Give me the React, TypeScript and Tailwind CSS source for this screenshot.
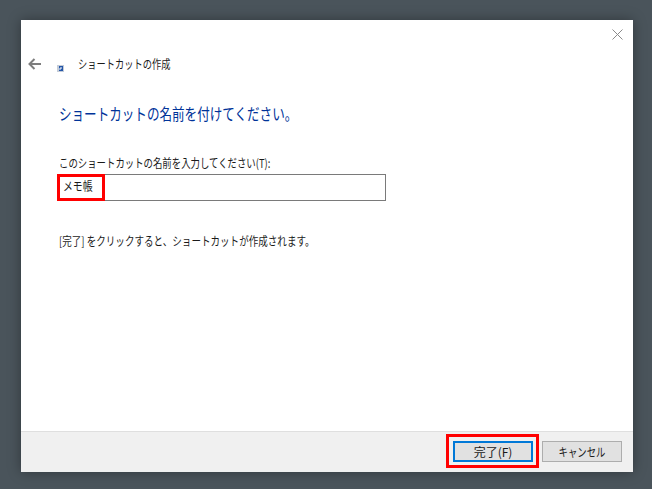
const FONT = "font-['Noto_Sans_CJK_JP','Liberation_Sans',sans-serif]";

function CloseIcon() {
  return (
    <svg width="11" height="11" viewBox="0 0 11 11">
      <path d="M0.5 0.5 L10.5 10.5 M10.5 0.5 L0.5 10.5" stroke="#8a8a8a" strokeWidth="1" fill="none" />
    </svg>
  );
}

function BackArrow() {
  return (
    <svg width="13" height="12" viewBox="0 0 13 12">
      <path d="M6.5 1 L1.5 6 L6.5 11 M1.5 6 L13 6" stroke="#7d7d7d" strokeWidth="2" fill="none" />
    </svg>
  );
}

function ShortcutIcon() {
  return (
    <svg width="7" height="7" viewBox="0 0 7 7">
      <rect x="0" y="0" width="7" height="7" fill="#c4ccd8" />
      <rect x="2" y="1" width="4" height="5" fill="#2456a8" />
      <path d="M3 5 L3 3 L5 3" stroke="#fff" strokeWidth="1" fill="none" />
    </svg>
  );
}

export default function App() {
  return (
    <div className={`w-[652px] h-[489px] bg-[#4a545b] pt-[20px] pl-[21px] overflow-hidden ${FONT}`}>
      <div className="w-[612px] h-[452px] bg-white flex flex-col shadow-[0_0_12px_rgba(0,0,0,0.35)]">
        {/* Close */}
        <div className="h-[20px] flex justify-end items-start pt-[9px] pr-[10px] shrink-0">
          <CloseIcon />
        </div>
        {/* Title row */}
        <div className="flex items-start pl-[7px] mt-[16px] h-[20px] shrink-0">
          <div className="mt-[2px]">
            <BackArrow />
          </div>
          <div className="ml-[16px] mt-[9px]">
            <ShortcutIcon />
          </div>
          <span className="ml-[14px] text-[12px] leading-[16px] text-[#1a1a1a] inline-block origin-left scale-x-[0.77] whitespace-nowrap">
            ショートカットの作成
          </span>
        </div>

        {/* Body */}
        <div className="flex-1 pl-[38px] pt-[26px]">
          <h1 className="text-[16px] leading-[22px] font-normal text-[#003399] origin-left scale-x-[0.785] whitespace-nowrap">
            ショートカットの名前を付けてください。
          </h1>
          <label className="block mt-[31px] text-[12px] leading-[16px] text-[#1a1a1a] origin-left scale-x-[0.783] whitespace-nowrap">
            このショートカットの名前を入力してください(T):
          </label>
          <div className="relative mt-[3px] w-[327px] h-[27px] border border-[#7a7a7a] pl-[3px] pt-[2px] text-[12px] leading-[18px] text-[#1a1a1a]">
            <span className="inline-block origin-left scale-x-[0.82]">メモ帳</span>
            <div className="absolute left-[-3px] top-[-1px] w-[48px] h-[27px] border-[3px] border-[#ff0000]" />
          </div>
          <p className="mt-[32px] text-[12px] leading-[16px] text-[#1a1a1a] origin-left scale-x-[0.796] whitespace-nowrap">
            [完了] をクリックすると、ショートカットが作成されます。
          </p>
        </div>

        {/* Footer */}
        <div className="h-[41px] shrink-0 bg-[#f0f0f0] border-t border-[#dfdfdf] flex items-start justify-end gap-[9px] pt-[9px] pr-[11px]">
          <div className="relative">
            <button className="block w-[80px] h-[21px] bg-[#e1e1e1] border-2 border-[#0078d7] text-[12px] leading-[16px] text-[#1a1a1a]">
              完了(F)
            </button>
            <div className="absolute left-[-7px] top-[-7px] w-[93px] h-[34px] border-[3px] border-[#ff0000]" />
          </div>
          <button className="block w-[80px] h-[21px] bg-[#e1e1e1] border border-[#adadad] text-[12px] leading-[18px] text-[#1a1a1a]">
            <span className="inline-block scale-x-[0.78] whitespace-nowrap">キャンセル</span>
          </button>
        </div>
      </div>
    </div>
  );
}
